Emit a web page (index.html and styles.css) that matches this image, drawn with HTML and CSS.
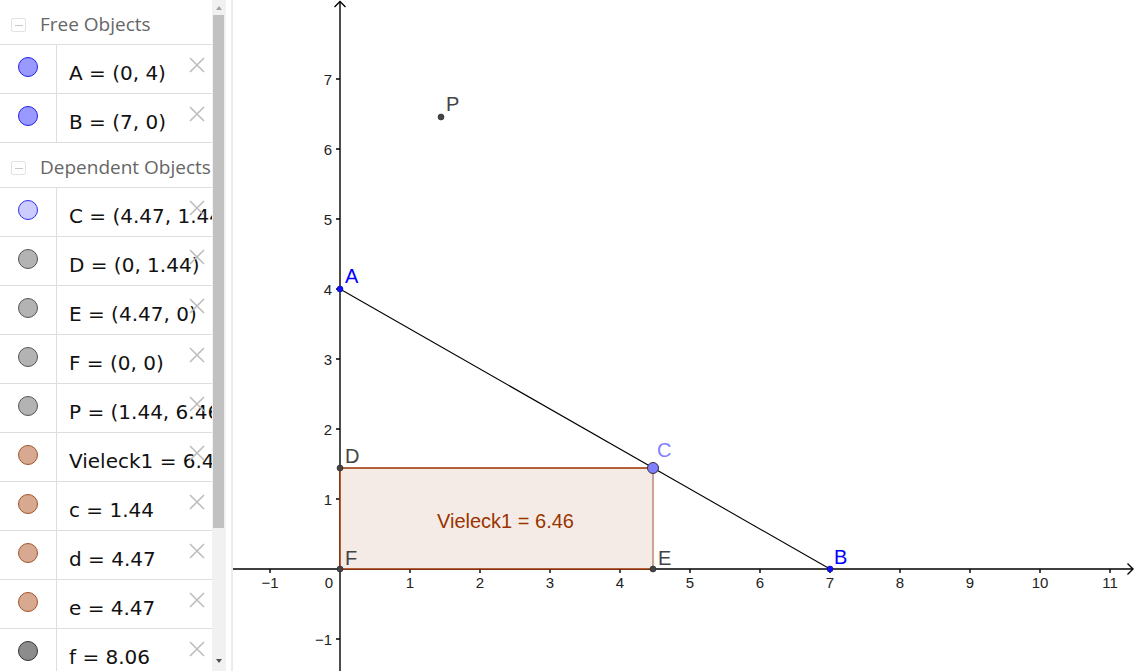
FILE: index.html
```html
<!DOCTYPE html>
<html lang="en">
<head>
<meta charset="utf-8">
<title>GeoGebra</title>
<link rel="stylesheet" href="styles.css">
</head>
<body>
<div class="app">
  <aside class="sidebar">
    <div class="list">
      <div class="group-header"><span class="toggle"></span><span class="group-title">Free Objects</span></div>
      <div class="row"><div class="marble-cell"><div class="marble m-blue"></div></div><div class="value">A = (0, 4)</div><svg class="del" viewBox="0 0 16 16"><path d="M1 1L15 15M15 1L1 15"/></svg></div>
      <div class="row"><div class="marble-cell"><div class="marble m-blue"></div></div><div class="value">B = (7, 0)</div><svg class="del" viewBox="0 0 16 16"><path d="M1 1L15 15M15 1L1 15"/></svg></div>
      <div class="group-header"><span class="toggle"></span><span class="group-title">Dependent Objects</span></div>
      <div class="row"><div class="marble-cell"><div class="marble m-light"></div></div><div class="value">C = (4.47, 1.44)</div><svg class="del" viewBox="0 0 16 16"><path d="M1 1L15 15M15 1L1 15"/></svg></div>
      <div class="row"><div class="marble-cell"><div class="marble m-gray"></div></div><div class="value">D = (0, 1.44)</div><svg class="del" viewBox="0 0 16 16"><path d="M1 1L15 15M15 1L1 15"/></svg></div>
      <div class="row"><div class="marble-cell"><div class="marble m-gray"></div></div><div class="value">E = (4.47, 0)</div><svg class="del" viewBox="0 0 16 16"><path d="M1 1L15 15M15 1L1 15"/></svg></div>
      <div class="row"><div class="marble-cell"><div class="marble m-gray"></div></div><div class="value">F = (0, 0)</div><svg class="del" viewBox="0 0 16 16"><path d="M1 1L15 15M15 1L1 15"/></svg></div>
      <div class="row"><div class="marble-cell"><div class="marble m-gray"></div></div><div class="value">P = (1.44, 6.46)</div><svg class="del" viewBox="0 0 16 16"><path d="M1 1L15 15M15 1L1 15"/></svg></div>
      <div class="row"><div class="marble-cell"><div class="marble m-brown"></div></div><div class="value">Vieleck1 = 6.46</div><svg class="del" viewBox="0 0 16 16"><path d="M1 1L15 15M15 1L1 15"/></svg></div>
      <div class="row"><div class="marble-cell"><div class="marble m-brown"></div></div><div class="value">c = 1.44</div><svg class="del" viewBox="0 0 16 16"><path d="M1 1L15 15M15 1L1 15"/></svg></div>
      <div class="row"><div class="marble-cell"><div class="marble m-brown"></div></div><div class="value">d = 4.47</div><svg class="del" viewBox="0 0 16 16"><path d="M1 1L15 15M15 1L1 15"/></svg></div>
      <div class="row"><div class="marble-cell"><div class="marble m-brown"></div></div><div class="value">e = 4.47</div><svg class="del" viewBox="0 0 16 16"><path d="M1 1L15 15M15 1L1 15"/></svg></div>
      <div class="row"><div class="marble-cell"><div class="marble m-dark"></div></div><div class="value">f = 8.06</div><svg class="del" viewBox="0 0 16 16"><path d="M1 1L15 15M15 1L1 15"/></svg></div>
    </div>
    <div class="scrollbar">
      <div class="sb-btn"><span class="arrow-up"></span></div>
      <div class="thumb"></div>
      <div class="sb-rest"></div>
      <div class="sb-btn sb-btn-down"><span class="arrow-down"></span></div>
    </div>
    <div class="gutter"></div>
  </aside>
  <main class="canvas">
    <svg class="graph" width="903" height="671" viewBox="0 0 903 671">
      <g class="axes">
        <line x1="0" y1="569" x2="900" y2="569"/>
        <line x1="107" y1="1.5" x2="107" y2="671"/>
        <polyline points="101.5,7 107,1.5 112.5,7"/>
        <polyline points="894.5,563.5 900,569 894.5,574.5"/>
        <path d="M37 569v4M177 569v4M247 569v4M317 569v4M387 569v4M457 569v4M527 569v4M597 569v4M667 569v4M737 569v4M807 569v4M877 569v4"/>
        <path d="M107 639h-4M107 499h-4M107 429h-4M107 359h-4M107 289h-4M107 219h-4M107 149h-4M107 79h-4"/>
      </g>
      <g class="ticklabels">
        <text x="37" y="588" text-anchor="middle">−1</text>
        <text x="100" y="588" text-anchor="end">0</text>
        <text x="177" y="588" text-anchor="middle">1</text>
        <text x="247" y="588" text-anchor="middle">2</text>
        <text x="317" y="588" text-anchor="middle">3</text>
        <text x="387" y="588" text-anchor="middle">4</text>
        <text x="457" y="588" text-anchor="middle">5</text>
        <text x="527" y="588" text-anchor="middle">6</text>
        <text x="597" y="588" text-anchor="middle">7</text>
        <text x="667" y="588" text-anchor="middle">8</text>
        <text x="737" y="588" text-anchor="middle">9</text>
        <text x="807" y="588" text-anchor="middle">10</text>
        <text x="877" y="588" text-anchor="middle">11</text>
        <text x="99" y="644.5" text-anchor="end">−1</text>
        <text x="99" y="504.5" text-anchor="end">1</text>
        <text x="99" y="434.5" text-anchor="end">2</text>
        <text x="99" y="364.5" text-anchor="end">3</text>
        <text x="99" y="294.5" text-anchor="end">4</text>
        <text x="99" y="224.5" text-anchor="end">5</text>
        <text x="99" y="154.5" text-anchor="end">6</text>
        <text x="99" y="84.5" text-anchor="end">7</text>
      </g>
      <rect class="poly-fill" x="107" y="468" width="313" height="101"/>
      <polyline class="poly-edge" points="420,468 107,468 107,569 420,569"/>
      <line class="poly-edge-light" x1="420" y1="468" x2="420" y2="569"/>
      <text class="poly-label" x="204" y="528">Vieleck1 = 6.46</text>
      <line class="seg" x1="107" y1="289" x2="597" y2="569"/>
      <circle class="pt-blue" cx="107" cy="289" r="3"/>
      <circle class="pt-blue" cx="597" cy="569" r="3"/>
      <circle class="pt-dep" cx="107" cy="468" r="3"/>
      <circle class="pt-dep" cx="420" cy="569" r="3"/>
      <circle class="pt-dep" cx="107" cy="569" r="3"/>
      <circle class="pt-dep" cx="208" cy="117" r="3"/>
      <circle class="pt-c" cx="420" cy="468" r="5.5"/>
      <text class="lbl lbl-blue" x="112" y="283">A</text>
      <text class="lbl lbl-blue" x="601" y="564">B</text>
      <text class="lbl lbl-c" x="424" y="457">C</text>
      <text class="lbl lbl-dep" x="112" y="463">D</text>
      <text class="lbl lbl-dep" x="425" y="565">E</text>
      <text class="lbl lbl-dep" x="112" y="565">F</text>
      <text class="lbl lbl-dep" x="213" y="111">P</text>
    </svg>
  </main>
</div>
</body>
</html>
```
FILE: styles.css
```css
html, body {
  margin: 0;
  padding: 0;
  background: #fff;
}
body {
  width: 1136px;
  height: 671px;
  overflow: hidden;
}
.app {
  display: flex;
  width: 1136px;
  height: 671px;
}
.sidebar {
  display: flex;
  flex-shrink: 0;
  height: 671px;
  border-right: 2px solid #ebebeb;
  background: #fff;
}
.list {
  width: 212px;
  height: 671px;
  overflow: hidden;
  flex-shrink: 0;
}
.group-header {
  display: flex;
  align-items: flex-start;
  height: 44px;
  border-bottom: 1px solid #dedede;
}
.toggle {
  display: flex;
  align-items: center;
  justify-content: center;
  box-sizing: border-box;
  width: 15px;
  height: 14px;
  margin: 18px 0 0 11px;
  border: 1px solid #e2e2e2;
  border-radius: 2px;
  flex-shrink: 0;
}
.toggle::after {
  content: "";
  width: 8px;
  height: 1px;
  background: #c8c8c8;
}
.group-title {
  margin: 12px 0 0 14px;
  font-family: "Open Sans", Roboto, "Liberation Sans", sans-serif;
  font-size: 19px;
  line-height: 24px;
  color: #666;
  white-space: nowrap;
}
.row {
  position: relative;
  display: flex;
  height: 48px;
  border-bottom: 1px solid #dedede;
}
.marble-cell {
  width: 56px;
  flex-shrink: 0;
  border-right: 1px solid #dedede;
}
.marble {
  box-sizing: border-box;
  width: 20px;
  height: 20px;
  margin: 12px 0 0 18px;
  border-radius: 50%;
  border: 1px solid;
}
.m-blue { background: #9999ff; border-color: #2020ee; }
.m-light { background: #ccccff; border-color: #3030ee; }
.m-gray { background: #b3b3b3; border-color: #555; }
.m-brown { background: #d6a990; border-color: #a5532b; }
.m-dark { background: #8c8c8c; border-color: #333; }
.value {
  padding: 16px 0 0 12px;
  font-family: "DejaVu Sans", sans-serif;
  font-size: 20px;
  line-height: 24px;
  color: #111;
  white-space: nowrap;
}
.del {
  position: absolute;
  left: 189px;
  top: 12px;
  width: 16px;
  height: 16px;
}
.del path {
  stroke: #bdbdbd;
  stroke-width: 1.6;
  fill: none;
}
.scrollbar {
  display: flex;
  flex-direction: column;
  width: 14px;
  height: 671px;
  background: #f1f1f1;
  flex-shrink: 0;
}
.sb-btn {
  display: flex;
  justify-content: center;
  height: 15px;
  flex-shrink: 0;
}
.arrow-up {
  margin-top: 6px;
  width: 0;
  height: 0;
  border-left: 3.5px solid transparent;
  border-right: 3.5px solid transparent;
  border-bottom: 4px solid #a3a3a3;
}
.sb-btn-down {
  height: 16px;
}
.arrow-down {
  margin-top: 4px;
  width: 0;
  height: 0;
  border-left: 3.5px solid transparent;
  border-right: 3.5px solid transparent;
  border-top: 4px solid #505050;
}
.thumb {
  width: 11px;
  height: 513px;
  margin-left: 1px;
  background: #c1c1c1;
  flex-shrink: 0;
}
.sb-rest {
  flex: 1;
}
.gutter {
  width: 5px;
  flex-shrink: 0;
}
.canvas {
  flex: 1;
  height: 671px;
  overflow: hidden;
}
.graph {
  display: block;
}
.axes line, .axes polyline, .axes path {
  stroke: #000;
  stroke-width: 1.4;
  fill: none;
}
.ticklabels text {
  font-family: "Liberation Sans", Arial, sans-serif;
  font-size: 15px;
  fill: #222;
}
.poly-fill {
  fill: #f5ebe6;
}
.poly-edge {
  fill: none;
  stroke: #993300;
  stroke-width: 1.5;
}
.poly-edge-light {
  stroke: #c38a6c;
  stroke-width: 1.5;
}
.poly-label {
  font-family: "Liberation Sans", Arial, sans-serif;
  font-size: 20px;
  fill: #993300;
}
.seg {
  stroke: #000;
  stroke-width: 1.1;
}
.pt-blue {
  fill: #1010ff;
  stroke: #00008a;
  stroke-width: 0.6;
}
.pt-dep {
  fill: #444;
  stroke: #222;
  stroke-width: 0.6;
}
.pt-c {
  fill: #7f7fff;
  stroke: #333;
  stroke-width: 1;
}
.lbl {
  font-family: "Liberation Sans", Arial, sans-serif;
  font-size: 20px;
}
.lbl-blue { fill: #0000ff; }
.lbl-c { fill: #7f7fff; }
.lbl-dep { fill: #444; }
```
